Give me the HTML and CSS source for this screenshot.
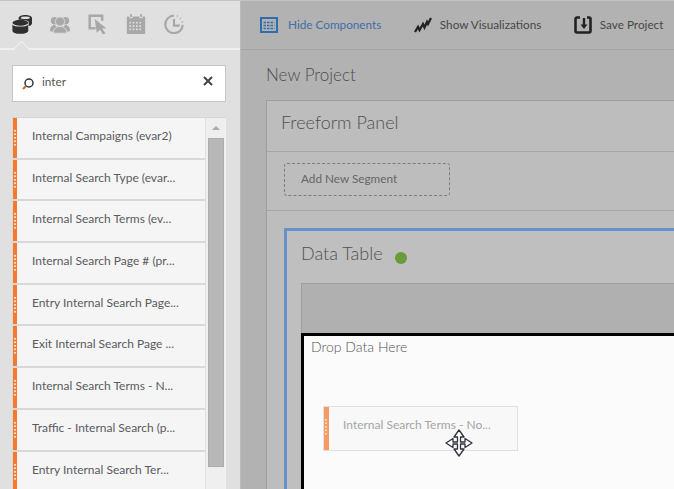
FILE: index.html
```html
<!DOCTYPE html>
<html lang="en">
<head>
    <meta charset="UTF-8">
    <meta name="viewport" content="width=device-width, initial-scale=1.0">
    <title>New Project</title>
    <link rel="stylesheet" href="styles.css">
</head>
<body>
    <div class="app">
        <aside class="sidebar">
            <div class="tabs">
                <svg class="tab-icon" viewBox="0 0 24 24"><path d="M8 5c0-5 16-5 16 0v6c0 2-2 3-4 3.500V9C17 7 12 7 8 7z" fill="#2f2f2f"/><ellipse cx="16" cy="4.500" rx="5.500" ry="1.600" fill="#e0e0e0"/><ellipse cx="10" cy="10.500" rx="9.500" ry="3.500" fill="#2f2f2f"/><path d="M.5 12.500c2 3.500 17 3.500 19 0V20c0 5-19 5-19 0z" fill="#2f2f2f"/></svg>
                <svg class="tab-icon" viewBox="0 0 24 24" fill="#a8a8a8"><circle cx="5.500" cy="8" r="4.500"/><circle cx="18.500" cy="8" r="4.500"/><path d="M0 20c0-4 2-6 5-7l3 2v6H1zM24 20c0-4-2-6-5-7l-3 2v6h7z"/><circle cx="12" cy="9" r="5.500" stroke="#e0e0e0"/><path d="M4 23c0-6 4-8 8-8s8 2 8 8z" stroke="#e0e0e0"/></svg>
                <svg class="tab-icon" viewBox="0 0 24 24"><path d="M9 17H2V2h15v6" fill="none" stroke="#a8a8a8" stroke-width="3"/><path d="M8 6l14 11-5 .5 4 6-3 1.500-3.500-6-4 3.500z" fill="#a8a8a8"/></svg>
                <svg class="tab-icon" viewBox="0 0 24 24"><rect x="1" y="3" width="22" height="21" fill="#a8a8a8"/><path d="M6 0v5M18 0v5" stroke="#e0e0e0" stroke-width="4"/><path d="M6 0v4M18 0v4" stroke="#a8a8a8" stroke-width="2"/><path d="M4 10.500h16M4 14.500h16M4 18.500h16" stroke="#e0e0e0" stroke-width="2" stroke-dasharray="2 2"/></svg>
                <svg class="tab-icon" viewBox="0 0 24 24" fill="none" stroke="#a8a8a8" stroke-width="2.600"><path d="M12 2a10.500 10.500 0 1 0 10.500 11"/><path d="M12 6v8h7"/><path d="M15.500 2.500l1 .3M19.500 5l.6.600M22 9l.3 1" stroke-width="2.800"/></svg>
            </div>
            <div class="search">
                <svg class="search-icon" viewBox="0 0 14 14"><circle cx="8" cy="6" r="4" fill="none" stroke="#333" stroke-width="1.500"/><path d="M5 9l-3 3" stroke="#b5702c" stroke-width="2"/></svg>
                <span class="search-text">inter</span>
                <svg class="clear-icon" viewBox="0 0 10 10"><path d="M1 1l8 8M9 1l-8 8" stroke="#444" stroke-width="2"/></svg>
            </div>
            <div class="list">
                <ul class="items">
                    <li class="item"><span class="grip"></span><span class="item-name">Internal Campaigns (evar2)</span></li>
                    <li class="item"><span class="grip"></span><span class="item-name">Internal Search Type (evar...</span></li>
                    <li class="item"><span class="grip"></span><span class="item-name">Internal Search Terms (ev...</span></li>
                    <li class="item"><span class="grip"></span><span class="item-name">Internal Search Page # (pr...</span></li>
                    <li class="item"><span class="grip"></span><span class="item-name">Entry Internal Search Page...</span></li>
                    <li class="item"><span class="grip"></span><span class="item-name">Exit Internal Search Page ...</span></li>
                    <li class="item"><span class="grip"></span><span class="item-name">Internal Search Terms - N...</span></li>
                    <li class="item"><span class="grip"></span><span class="item-name">Traffic - Internal Search (p...</span></li>
                    <li class="item"><span class="grip"></span><span class="item-name">Entry Internal Search Ter...</span></li>
                </ul>
                <div class="scrollbar">
                    <span class="arrow"></span>
                    <span class="thumb"></span>
                </div>
            </div>
        </aside>
        <main class="main">
            <div class="toolbar">
                <div class="tool tool-active">
                    <svg class="tool-icon" viewBox="0 0 18 18"><rect x="1" y="2" width="16" height="14" fill="none" stroke="#2f6db0" stroke-width="2"/><path d="M3.500 6.500h11M3.500 9.500h11M3.500 12.500h11" stroke="#2f6db0" stroke-width="1.400" stroke-dasharray="2.500 1"/></svg>
                    <span>Hide Components</span>
                </div>
                <div class="tool">
                    <svg class="tool-icon" viewBox="0 0 18 18"><path d="M1 16l3-5 1.500 3L9 8l1.500 3.500L13 6l1 2 3-6" fill="none" stroke="#222" stroke-width="2.300"/></svg>
                    <span>Show Visualizations</span>
                </div>
                <div class="tool">
                    <svg class="tool-icon" viewBox="0 0 18 18"><path d="M6 1.500H3A1.500 1.500 0 0 0 1.500 3v12A1.500 1.500 0 0 0 3 16.500h12a1.500 1.500 0 0 0 1.500-1.500V3A1.500 1.500 0 0 0 15 1.500h-2" fill="none" stroke="#222" stroke-width="2.600"/><path d="M10 2v8" stroke="#222" stroke-width="2.400"/><path d="M6.500 8.500h7L10 13z" fill="#222"/></svg>
                    <span>Save Project</span>
                </div>
            </div>
            <div class="canvas">
                <h1 class="project-title">New Project</h1>
                <section class="panel">
                    <h2 class="panel-title">Freeform Panel</h2>
                    <div class="segments">
                        <div class="segment-drop">Add New Segment</div>
                    </div>
                    <div class="panel-body">
                        <div class="table-viz">
                            <div class="viz-head">
                                <h3 class="viz-title">Data Table</h3>
                                <span class="status-dot"></span>
                            </div>
                            <div class="table-head"></div>
                            <div class="drop-zone">Drop Data Here</div>
                        </div>
                    </div>
                </section>
            </div>
        </main>
    </div>

    <!-- item being dragged -->
    <div class="drag-item"><span class="grip"></span><span class="item-name">Internal Search Terms - No...</span></div>
    <svg class="move-cursor" viewBox="0 0 28 28"><path d="M14 1l5 7h-3.500v5H20V9.500l7 4.500-7 4.500V15h-4.500v5H19l-5 7-5-7h3.500v-5H8v3.500L1 14l7-4.500V13h4.500V8H9z" fill="#fff" stroke="#30323c" stroke-width="1.300" stroke-linejoin="round"/></svg>
</body>
</html>
```

FILE: styles.css
```css
html, body {
    height: 100%;
}
body {
    font-family: "Lato", "Open Sans", sans-serif;
    margin: 0;
    padding: 0;
    overflow: hidden;
    background-color: #b2b2b2;
    color: #555;
}
h1, h2, h3, ul {
    margin: 0;
    padding: 0;
    font-weight: normal;
}
.app {
    display: flex;
    height: 489px;
    overflow: hidden;
    border-top: 1px solid #c4c4c4;
    box-sizing: border-box;
}

/* left rail */
.sidebar {
    flex: 0 0 241px;
    box-sizing: border-box;
    padding: 0 14px 0 12px;
    background-color: #e0e0e0;
    display: flex;
    flex-direction: column;
    border-right: 1px solid #bbb;
}
.tabs {
    display: flex;
    gap: 18px;
    flex: 0 0 49px;
    margin: 0 -14px 0 -12px;
    padding: 13px 0 0 12px;
    box-sizing: border-box;
    border-bottom: 2px solid #f0f0f0;
    position: relative;
}
.tabs::after {
    content: "";
    position: absolute;
    left: 16px;
    bottom: -6px;
    width: 10px;
    height: 10px;
    background-color: #e0e0e0;
    border-top: 1px solid #f0f0f0;
    border-left: 1px solid #f0f0f0;
    transform: rotate(45deg);
}
.tab-icon {
    width: 20px;
    height: 20px;
}
.search {
    display: flex;
    flex: 0 0 37px;
    align-items: center;
    margin-top: 15px;
    padding: 0 12px 0 8px;
    background-color: #fff;
    border: 1px solid #c6c6c6;
    box-sizing: border-box;
    position: relative;
}
.search-icon {
    width: 14px;
    height: 14px;
    margin-top: 1px;
}
.search-text {
    flex: 1;
    margin-left: 7px;
    font-size: 11.75px;
    margin-top: -5px;
}
.clear-icon {
    width: 10px;
    height: 10px;
    margin-top: -5px;
}
.list {
    display: flex;
    margin-top: 15px;
    flex: 1;
    min-height: 0;
    overflow: hidden;
    border-top: 1px solid #d4d4d4;
    border-left: 1px solid #d8d8d8;
}
.items {
    flex: 1;
    list-style: none;
}
.item {
    display: flex;
    height: 41.7px;
    box-sizing: border-box;
    background-color: #f5f5f5;
    border-bottom: 2px solid #d8d8d8;
}
.grip {
    flex: 0 0 4px;
    padding-top: 11px;
    box-sizing: border-box;
    background-color: #f47a2e;
}
/* the dots only sit on the upper part of the bar */
.grip::before {
    content: "";
    display: block;
    height: 17px;
    background-image: radial-gradient(circle, #f9dcc6 1px, transparent 1.200px);
    background-size: 4px 3.500px;
}
.item-name {
    padding: 10px 0 0 15px;
    font-size: 12px;
    line-height: 15px;
    color: #5a5a60;
    white-space: nowrap;
}
.scrollbar {
    flex: 0 0 20px;
    margin-left: 1px;
    box-sizing: border-box;
    padding: 0 2px;
    background-color: #efefef;
    display: flex;
    flex-direction: column;
    align-items: center;
}
.arrow {
    margin-top: 8px;
    border-left: 4px solid transparent;
    border-right: 4px solid transparent;
    border-bottom: 4px solid #aaa;
}
.thumb {
    margin-top: 8px;
    width: 100%;
    height: 329px;
    box-sizing: border-box;
    background-color: #b8b8b8;
    border: 1px solid #adadad;
}

/* main area */
.main {
    flex: 1;
    min-width: 0;
}
.toolbar {
    display: flex;
    height: 49px;
    box-sizing: border-box;
    padding: 15px 0 0 19px;
    gap: 33px;
    border-bottom: 1px solid #a4a4a4;
    white-space: nowrap;
}
.tool {
    display: flex;
    gap: 7.5px;
    font-size: 11.75px;
    line-height: 18px;
    color: #484848;
}
.tool-active {
    color: #3f6ea8;
    gap: 10px;
}
.tool-icon {
    width: 18px;
    height: 18px;
}
.canvas {
    padding: 13px 0 0 25px;
}
.project-title {
    font-size: 17px;
    font-weight: 300;
    line-height: 24px;
    color: #4e4e4e;
}
.panel {
    margin: 13px -20px 0 0;
    border: 1px solid #9d9d9d;
    background-color: #bdbdbd;
}
.panel-title {
    font-size: 18px;
    font-weight: 300;
    line-height: 24px;
    height: 51px;
    box-sizing: border-box;
    padding: 9px 14px;
    color: #505050;
    border-bottom: 1px solid #a6a6a6;
}
.segments {
    height: 59px;
    box-sizing: border-box;
    padding: 11px 0 0 17px;
    border-bottom: 1px solid #a6a6a6;
}
.segment-drop {
    width: 166px;
    height: 33px;
    box-sizing: border-box;
    border: 1px dashed #7d7d7d;
    border-radius: 3px;
    padding-left: 16px;
    font-size: 11.75px;
    line-height: 29px;
    color: #666;
}
.panel-body {
    padding: 17px 0 0 17px;
}
.table-viz {
    border: 3px solid #6691c9;
    border-right: none;
    border-bottom: none;
    padding: 0 0 30px 14px;
    background-color: #bfbfbf;
}
.viz-head {
    display: flex;
    height: 52px;
    box-sizing: border-box;
    padding-top: 9px;
    gap: 12px;
}
.viz-title {
    font-size: 18px;
    font-weight: 300;
    line-height: 26px;
    color: #505050;
}
.status-dot {
    width: 12px;
    height: 12px;
    margin-top: 12px;
    border-radius: 50%;
    background-color: #6a9a3a;
}
.table-head {
    height: 49px;
    background-color: #b0b0b0;
    border: 1px solid #9f9f9f;
    border-right: none;
    border-bottom: none;
}
.drop-zone {
    height: 200px;
    box-sizing: border-box;
    padding: 2px 7px;
    border: 3px solid #000;
    border-right: none;
    background-color: #fbfbfb;
    font-size: 14px;
    font-weight: 300;
    line-height: 17px;
    color: #555;
}

/* drag ghost, sits over the drop zone */
.drag-item {
    position: absolute;
    left: 323px;
    top: 406px;
    width: 195px;
    height: 45px;
    box-sizing: border-box;
    display: flex;
    background-color: #f8f8f8;
    border: 1px solid #e0e0e0;
}
.drag-item .grip {
    flex-basis: 5px;
    background-color: #f69c63;
}
.drag-item .item-name {
    color: #a5a5a5;
    padding: 10px 0 0 14px;
}
.move-cursor {
    position: absolute;
    left: 445px;
    top: 429px;
    width: 28px;
    height: 28px;
}
```
